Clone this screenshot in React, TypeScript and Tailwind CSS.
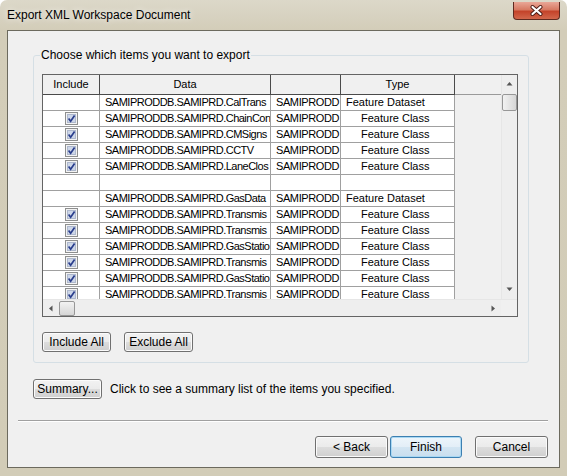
import React from "react";

type Row = { check?: boolean; data: string; db: string; type: string } | null;

const rows: Row[] = [
  { data: "SAMIPRODDB.SAMIPRD.CalTrans", db: "SAMIPRODD", type: "Feature Dataset" },
  { check: true, data: "SAMIPRODDB.SAMIPRD.ChainCon", db: "SAMIPRODD", type: "Feature Class" },
  { check: true, data: "SAMIPRODDB.SAMIPRD.CMSigns", db: "SAMIPRODD", type: "Feature Class" },
  { check: true, data: "SAMIPRODDB.SAMIPRD.CCTV", db: "SAMIPRODD", type: "Feature Class" },
  { check: true, data: "SAMIPRODDB.SAMIPRD.LaneClos", db: "SAMIPRODD", type: "Feature Class" },
  null,
  { data: "SAMIPRODDB.SAMIPRD.GasData", db: "SAMIPRODD", type: "Feature Dataset" },
  { check: true, data: "SAMIPRODDB.SAMIPRD.Transmis", db: "SAMIPRODD", type: "Feature Class" },
  { check: true, data: "SAMIPRODDB.SAMIPRD.Transmis", db: "SAMIPRODD", type: "Feature Class" },
  { check: true, data: "SAMIPRODDB.SAMIPRD.GasStatio", db: "SAMIPRODD", type: "Feature Class" },
  { check: true, data: "SAMIPRODDB.SAMIPRD.Transmis", db: "SAMIPRODD", type: "Feature Class" },
  { check: true, data: "SAMIPRODDB.SAMIPRD.GasStatio", db: "SAMIPRODD", type: "Feature Class" },
  { check: true, data: "SAMIPRODDB.SAMIPRD.Transmis", db: "SAMIPRODD", type: "Feature Class" },
];

function CheckBox() {
  return (
    <svg width="13" height="13" viewBox="0 0 13 13">
      <rect x="0.5" y="0.5" width="12" height="12" fill="#f3f3f3" stroke="#8e8f8f" />
      <rect x="2.5" y="2.5" width="8" height="8" fill="#cdd6e8" stroke="#aeb8cd" />
      <path d="M3.6 6.6 L5.6 9.2 L9.6 3.4" stroke="#2b3f8d" strokeWidth="1.7" fill="none" />
    </svg>
  );
}

function Arrow({ dir }: { dir: "up" | "down" | "left" | "right" }) {
  const d = {
    up: "M0.5 4.5 L3.5 1 L6.5 4.5 Z",
    down: "M0.5 1.5 L3.5 5 L6.5 1.5 Z",
    left: "M4.5 0.5 L1 3.5 L4.5 6.5 Z",
    right: "M1.5 0.5 L5 3.5 L1.5 6.5 Z",
  }[dir];
  return (
    <svg width="7" height="7" viewBox="0 0 7 7">
      <path d={d} fill="#555" />
    </svg>
  );
}

function WinButton({
  children,
  className,
  primary,
}: {
  children: React.ReactNode;
  className?: string;
  primary?: boolean;
}) {
  return (
    <button
      className={
        "flex items-center justify-center rounded-[3px] border text-[12px] text-black " +
        (primary
          ? "border-[#3c7fb1] bg-[linear-gradient(180deg,#edf5fb_0%,#e3eef7_50%,#d3e5f2_50%,#c9deee_100%)] shadow-[inset_0_0_0_1px_#a9d8f3] "
          : "border-[#707070] bg-[linear-gradient(180deg,#f2f2f2_0%,#ebebeb_50%,#dddddd_50%,#cfcfcf_100%)] shadow-[inset_0_0_0_1px_#fbfbfb] ") +
        (className ?? "")
      }
    >
      {children}
    </button>
  );
}

export default function App() {
  return (
    <div className="flex h-[476px] w-[567px] flex-col overflow-hidden rounded-t-[7px] bg-[linear-gradient(180deg,#dcd8c9_0%,#d3cdb9_30px,#d2ccb7_100%)] font-['Liberation_Sans',Arial,sans-serif]">
      {/* title bar */}
      <div className="flex h-[30px] shrink-0 items-start">
        <div className="pl-[7px] pt-[7px] text-[12px] leading-[16px] text-black [text-shadow:0_0_6px_#ffffff]">
          Export XML Workspace Document
        </div>
        <div className="ml-auto mr-[7px] mt-[2px] flex h-[18px] w-[47px] items-center justify-center rounded-b-[4px] border border-t-0 border-[#5e2a20] bg-[linear-gradient(180deg,#e9a797_0%,#d77a63_45%,#c4432a_55%,#d2674c_100%)]">
          <svg width="13" height="11" viewBox="0 0 13 11">
            <path d="M2.5 2 L10.5 9 M10.5 2 L2.5 9" stroke="#4a1b14" strokeWidth="4" strokeLinecap="round" />
            <path d="M2.5 2 L10.5 9 M10.5 2 L2.5 9" stroke="#ffffff" strokeWidth="2.2" strokeLinecap="round" />
          </svg>
        </div>
      </div>

      {/* client area */}
      <div className="ml-[7px] flex h-[438px] w-[553px] flex-col border border-[#6c6a5e] bg-[#f0f0f0]">
        {/* group box */}
        <div className="relative ml-[25px] mt-[24px] h-[308px] w-[496px] rounded-[3px] border border-[#d5dfe5]">
          <div className="absolute left-[6px] top-[-9px] bg-[#f0f0f0] px-[1px] text-[12px] leading-[16px] text-black">
            Choose which items you want to export
          </div>

          <div className="pl-[8px] pt-[18px]">
            {/* list frame */}
            <div className="flex h-[243px] w-[476px] flex-col border border-[#646464] bg-[#f0f0f0]">
              <div className="flex h-[224px]">
                {/* table */}
                <div className="w-[458px] overflow-hidden text-[11px] text-black">
                  <div className="flex h-[20px]">
                    <div className="flex w-[57px] items-center justify-center border-b border-r border-[#4a4a4a]">Include</div>
                    <div className="flex w-[171px] items-center justify-center border-b border-r border-[#4a4a4a]">Data</div>
                    <div className="flex w-[70px] items-center justify-center border-b border-r border-[#4a4a4a]"></div>
                    <div className="flex w-[114px] items-center justify-center border-b border-r border-[#4a4a4a]">Type</div>
                    <div className="flex-1 border-b border-[#9a9a9a]"></div>
                  </div>
                  {rows.map((r, i) => (
                    <div key={i} className="flex h-[16px] leading-[15px]">
                      <div className="flex w-[57px] items-center justify-center border-b border-r border-[#a0a0a0] bg-white">
                        {r?.check && <CheckBox />}
                      </div>
                      <div className="w-[171px] overflow-hidden whitespace-nowrap border-b border-r border-[#a0a0a0] bg-white pl-[5px] tracking-[-0.5px]">
                        {r?.data}
                      </div>
                      <div className="w-[70px] overflow-hidden whitespace-nowrap border-b border-r border-[#a0a0a0] bg-white pl-[5px] tracking-[-0.4px]">
                        {r?.db}
                      </div>
                      <div
                        className={
                          "w-[114px] overflow-hidden whitespace-nowrap border-b border-r border-[#a0a0a0] bg-white " +
                          (r?.type === "Feature Class" ? "pl-[20px]" : "pl-[5px]")
                        }
                      >
                        {r?.type}
                      </div>
                    </div>
                  ))}
                </div>
                {/* vertical scrollbar */}
                <div className="flex w-[16px] flex-col items-center border-l border-[#e6e6e6] bg-[#eeeeee]">
                  <div className="flex h-[17px] items-center justify-center pt-[2px]">
                    <Arrow dir="up" />
                  </div>
                  <div className="mt-[2px] h-[17px] w-[15px] rounded-[2px] border border-[#979797] bg-[linear-gradient(90deg,#f2f2f2_0%,#e4e4e4_50%,#d6d6d6_100%)]"></div>
                  <div className="mt-auto flex h-[17px] items-center justify-center pb-[3px]">
                    <Arrow dir="down" />
                  </div>
                </div>
              </div>
              {/* horizontal scrollbar */}
              <div className="flex h-[17px] border-t border-[#e6e6e6]">
                <div className="flex w-[458px] items-center bg-[#eeeeee]">
                  <div className="flex w-[16px] items-center justify-center">
                    <Arrow dir="left" />
                  </div>
                  <div className="h-[15px] w-[16px] rounded-[2px] border border-[#979797] bg-[linear-gradient(180deg,#f2f2f2_0%,#e4e4e4_50%,#d6d6d6_100%)]"></div>
                  <div className="ml-auto flex w-[16px] items-center justify-center">
                    <Arrow dir="right" />
                  </div>
                </div>
                <div className="w-[16px] bg-[#f0f0f0]"></div>
              </div>
            </div>

            <div className="mt-[15px] flex gap-[13px]">
              <WinButton className="h-[20px] w-[69px]">Include All</WinButton>
              <WinButton className="h-[20px] w-[69px]">Exclude All</WinButton>
            </div>
          </div>
        </div>

        {/* summary */}
        <div className="ml-[25px] mt-[16px] flex items-center gap-[8px]">
          <WinButton className="h-[20px] w-[69px]">Summary...</WinButton>
          <span className="text-[12px] text-black">Click to see a summary list of the items you specified.</span>
        </div>

        {/* separator */}
        <div className="ml-[10px] mt-[21px] h-[2px] w-[530px] border-t border-[#a0a0a0] bg-white"></div>

        {/* bottom buttons */}
        <div className="mr-[11px] mt-[14px] flex justify-end">
          <WinButton className="h-[22px] w-[73px]">&lt; Back</WinButton>
          <WinButton primary className="ml-[2px] h-[22px] w-[72px]">
            Finish
          </WinButton>
          <WinButton className="ml-[13px] h-[22px] w-[73px]">Cancel</WinButton>
        </div>
      </div>
    </div>
  );
}
